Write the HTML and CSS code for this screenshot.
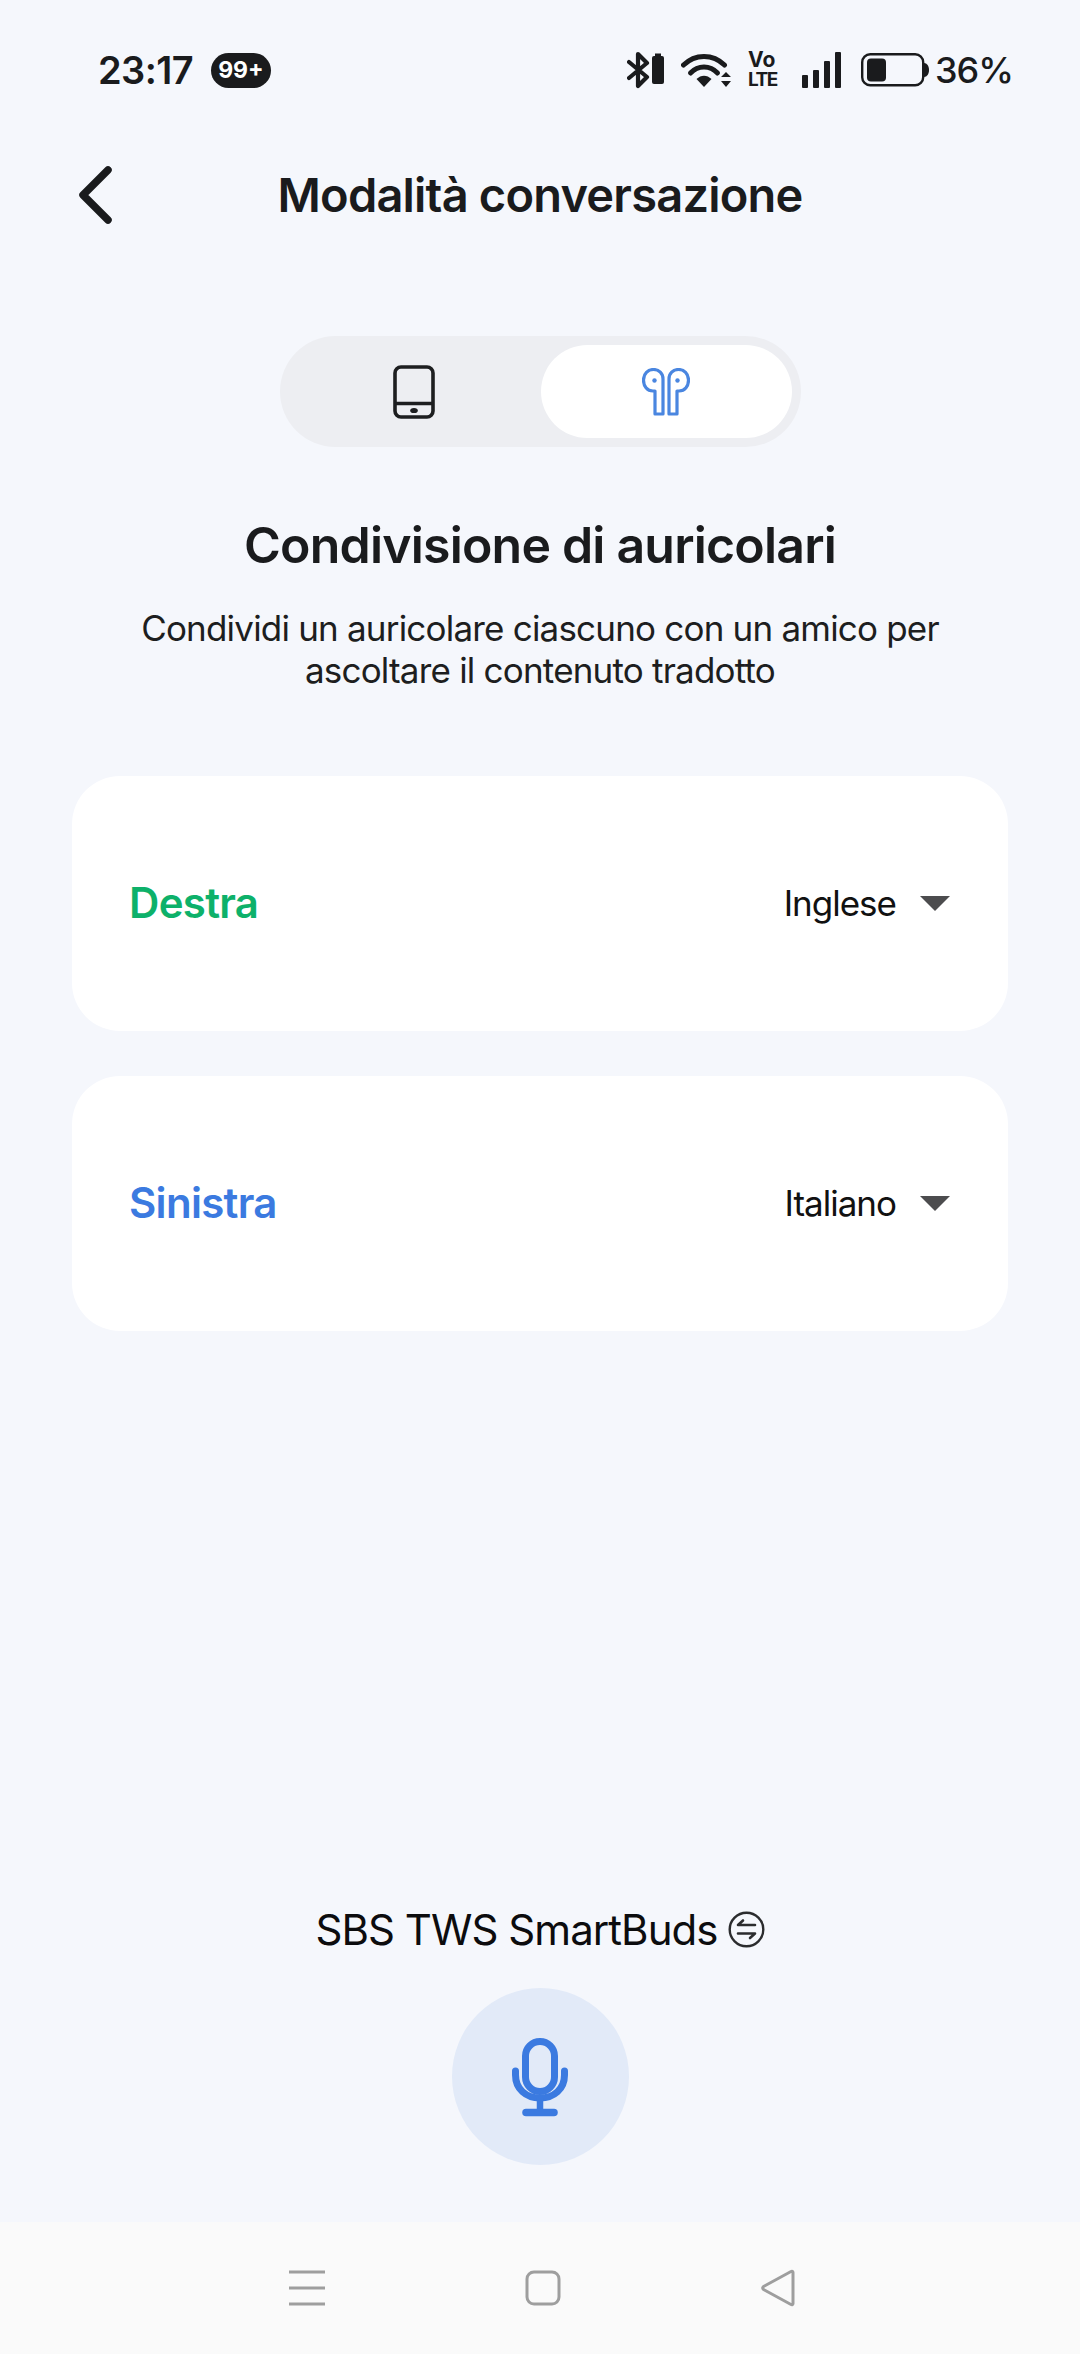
FILE: index.html
```html
<!DOCTYPE html>
<html lang="it">
<head>
  <meta charset="UTF-8" />
  <meta name="viewport" content="width=device-width, initial-scale=1.0" />
  <title>Modalità conversazione</title>
  <link rel="stylesheet" href="styles.css">
</head>
<body>
  <div class="page">
    <!-- Status bar -->
    <div class="status-bar">
      <div class="status-left">
        <span class="time">23:17</span>
        <span class="notif-badge">99+</span>
      </div>
      <div class="status-right">
        <svg class="ic-bt" width="38" height="38" viewBox="0 0 38 38">
          <path d="M2 11 L20 26 L11 35 L11 3 L20 12 L2 27" fill="none" stroke="#1a1b1d" stroke-width="4.200" stroke-linejoin="round" stroke-linecap="round"/>
          <rect x="25" y="5" width="12" height="28" rx="2" fill="#1a1b1d"/>
          <rect x="28" y="2.500" width="6" height="3" fill="#1a1b1d"/>
        </svg>
        <svg class="ic-wifi" width="50" height="36" viewBox="0 0 50 36">
          <path d="M2.500 13 C14 1.500 32 1.500 43.500 13" fill="none" stroke="#1a1b1d" stroke-width="5" stroke-linecap="round"/>
          <path d="M9.500 21 C17 13 29 13 36.500 21" fill="none" stroke="#1a1b1d" stroke-width="5" stroke-linecap="round"/>
          <path d="M15.500 27 C20 22.500 26 22.500 30.500 27 L23 35 Z" fill="#1a1b1d"/>
          <path d="M40 25 L45 20 L50 25 Z M40 29 L50 29 L45 35 Z" fill="#1a1b1d"/>
        </svg>
        <span class="volte"><span>Vo</span><span>LTE</span></span>
        <svg class="ic-signal" width="39" height="36" viewBox="0 0 39 36">
          <rect x="0" y="23" width="6" height="13" rx="1" fill="#1a1b1d"/>
          <rect x="11" y="18" width="6" height="18" rx="1" fill="#1a1b1d"/>
          <rect x="22" y="9" width="6" height="27" rx="1" fill="#1a1b1d"/>
          <rect x="33" y="0" width="6" height="36" rx="1" fill="#1a1b1d"/>
        </svg>
        <svg class="ic-batt" width="68" height="34" viewBox="0 0 68 34">
          <rect x="1.200" y="1.200" width="61" height="31" rx="8" fill="none" stroke="#1a1b1d" stroke-width="2.400"/>
          <rect x="6" y="5.500" width="19" height="23" rx="4" fill="#1a1b1d"/>
          <path d="M63 10 C66 10 68 13 68 17 C68 21 66 24 63 24 Z" fill="#1a1b1d"/>
        </svg>
        <span class="batt-pct">36%</span>
      </div>
    </div>

    <!-- Header -->
    <div class="header">
      <svg class="back-icon" width="34" height="58" viewBox="0 0 34 58">
        <path d="M30 4 L5 29 L30 54" fill="none" stroke="#1a1b1d" stroke-width="7.500" stroke-linecap="round" stroke-linejoin="round"/>
      </svg>
      <h1 class="title">Modalità conversazione</h1>
    </div>

    <!-- Toggle -->
    <div class="mode-toggle">
      <div class="mode-option">
        <svg width="42" height="54" viewBox="0 0 42 54">
          <rect x="2" y="2" width="38" height="50" rx="6" fill="none" stroke="#1d1e20" stroke-width="3.600"/>
          <path d="M2 38.500 L40 38.500" stroke="#1d1e20" stroke-width="3.400"/>
          <ellipse cx="21" cy="45.500" rx="3.800" ry="2.600" fill="#1d1e20"/>
        </svg>
      </div>
      <div class="mode-option active">
        <svg width="48" height="48" viewBox="0 0 48 48">
          <g fill="none" stroke="#4a86e0" stroke-width="3.200" stroke-linejoin="round">
            <path d="M21 46 L13 46 L13 23 L11 23 C5 23 1.500 18 1.500 12 C1.500 5.500 6 1.500 11.500 1.500 C17 1.500 21 5.500 21 11 Z"/>
            <path d="M27 46 L35 46 L35 23 L37 23 C43 23 46.500 18 46.500 12 C46.500 5.500 42 1.500 36.500 1.500 C31 1.500 27 5.500 27 11 Z"/>
          </g>
          <circle cx="12.500" cy="12.500" r="2.200" fill="#4a86e0"/>
          <circle cx="35.500" cy="12.500" r="2.200" fill="#4a86e0"/>
        </svg>
      </div>
    </div>

    <h2 class="heading">Condivisione di auricolari</h2>
    <p class="subtext">Condividi un auricolare ciascuno con un amico per<br>ascoltare il contenuto tradotto</p>

    <!-- Language cards -->
    <div class="lang-card">
      <span class="side side-right">Destra</span>
      <div class="lang-select">
        <span>Inglese</span>
        <span class="caret"></span>
      </div>
    </div>
    <div class="lang-card">
      <span class="side side-left">Sinistra</span>
      <div class="lang-select">
        <span>Italiano</span>
        <span class="caret"></span>
      </div>
    </div>

    <div class="spacer"></div>

    <!-- Device + mic -->
    <div class="device">
      <span>SBS TWS SmartBuds</span>
      <svg width="37" height="37" viewBox="0 0 37 37">
        <circle cx="18.500" cy="18.500" r="16.800" fill="none" stroke="#2b2c2e" stroke-width="2.400"/>
        <path d="M27 14 L10 14 L15 9.500 M10 22.500 L27 22.500 L22 27" fill="none" stroke="#2b2c2e" stroke-width="2.600" stroke-linecap="round" stroke-linejoin="round"/>
      </svg>
    </div>
    <div class="mic-btn">
      <svg width="58" height="80" viewBox="0 0 58 80">
        <rect x="14.500" y="4.500" width="29" height="50" rx="14.500" fill="none" stroke="#3b7ae0" stroke-width="7"/>
        <path d="M4.500 34 L4.500 38 C4.500 52 15 61 29 61 C43 61 53.500 52 53.500 38 L53.500 34" fill="none" stroke="#3b7ae0" stroke-width="7" stroke-linecap="round"/>
        <path d="M29 61 L29 74" stroke="#3b7ae0" stroke-width="6.500"/>
        <path d="M15 75.500 L43 75.500" stroke="#3b7ae0" stroke-width="7.500" stroke-linecap="round"/>
      </svg>
    </div>

    <!-- Nav bar -->
    <div class="nav-bar">
      <svg width="36" height="38" viewBox="0 0 36 38">
        <path d="M0 3 L36 3 M0 19 L36 19 M0 35 L36 35" stroke="#9e9e9e" stroke-width="3.200"/>
      </svg>
      <svg width="36" height="36" viewBox="0 0 36 36">
        <rect x="2" y="2" width="32" height="32" rx="7" fill="none" stroke="#9e9e9e" stroke-width="3"/>
      </svg>
      <svg width="36" height="38" viewBox="0 0 36 38">
        <path d="M33 3.500 C33 2.500 32 2 31 2.500 L3.500 17.500 C2.500 18.500 2.500 19.500 3.500 20.500 L31 35.500 C32 36 33 35.500 33 34.500 Z" fill="none" stroke="#9e9e9e" stroke-width="3" stroke-linejoin="round"/>
      </svg>
    </div>
  </div>
</body>
</html>
```

FILE: styles.css
```css
* {
  box-sizing: border-box;
}
body {
  margin: 0;
  padding: 0;
  background: #f5f7fc;
  font-family: Inter, 'Noto Sans', sans-serif;
  color: #1a1b1d;
}
.page {
  width: 1080px;
  height: 2354px;
  display: flex;
  flex-direction: column;
  align-items: center;
  overflow: hidden;
}

/* status bar */
.status-bar {
  width: 100%;
  height: 140px;
  padding: 0 67px 0 98px;
  display: flex;
  justify-content: space-between;
  align-items: center;
}
.status-left {
  display: flex;
  align-items: center;
  gap: 18px;
}
.time {
  font-size: 38px;
  font-weight: 600;
  letter-spacing: -0.6px;
}
.notif-badge {
  width: 60px;
  height: 35px;
  border-radius: 18px;
  background: #1a1b1d;
  color: #fff;
  font-size: 23px;
  font-weight: 700;
  display: flex;
  align-items: center;
  justify-content: center;
}
.status-right {
  display: flex;
  align-items: center;
}
.ic-bt {
  margin-right: 16px;
}
.ic-wifi {
  margin-right: 17px;
}
.volte {
  width: 34px;
  margin-right: 20px;
  display: flex;
  flex-direction: column;
  align-items: flex-start;
  font-weight: 700;
  line-height: 20px;
}
.volte span:first-child {
  font-size: 21px;
}
.volte span:last-child {
  font-size: 19px;
  letter-spacing: -1.5px;
}
.ic-signal {
  margin-right: 20px;
}
.ic-batt {
  margin-right: 6px;
}
.batt-pct {
  font-size: 36px;
  font-weight: 500;
  letter-spacing: -1px;
}

/* header */
.header {
  position: relative;
  width: 100%;
  height: 110px;
  display: flex;
  align-items: center;
  justify-content: center;
}
.back-icon {
  position: absolute;
  left: 78px;
  top: 26px;
}
.title {
  margin: 0;
  padding-bottom: 2px;
  font-size: 47px;
  font-weight: 600;
  letter-spacing: -0.8px;
}

/* toggle */
.mode-toggle {
  margin-top: 86px;
  width: 521px;
  height: 111px;
  padding: 9px 9px 9px 8px;
  border-radius: 56px;
  background: #edeef2;
  display: flex;
}
.mode-option {
  width: 251px;
  height: 93px;
  border-radius: 47px;
  display: flex;
  align-items: center;
  justify-content: center;
}
.mode-option:first-child {
  width: 253px;
}
.mode-option.active {
  background: #fff;
}

.heading {
  margin: 68px 0 0;
  font-size: 50px;
  font-weight: 600;
  line-height: 60px;
  letter-spacing: -0.8px;
}
.subtext {
  margin: 32px 0 0;
  font-size: 35px;
  line-height: 42px;
  letter-spacing: -0.8px;
  text-align: center;
  color: #1d1e20;
}

/* cards */
.lang-card {
  width: 936px;
  height: 255px;
  margin-top: 45px;
  padding: 0 58px 2px 57px;
  border-radius: 48px;
  background: #fff;
  display: flex;
  align-items: center;
  justify-content: space-between;
}
.subtext + .lang-card {
  margin-top: 85px;
}
.side {
  font-size: 42px;
  font-weight: 600;
  letter-spacing: -0.7px;
}
.side-right {
  color: #0db16a;
}
.side-left {
  color: #3b7ae0;
}
.lang-select {
  display: flex;
  align-items: center;
  gap: 24px;
  font-size: 35px;
  letter-spacing: -1px;
  color: #111;
}
.caret {
  width: 0;
  height: 0;
  margin-top: 2px;
  border-left: 15px solid transparent;
  border-right: 15px solid transparent;
  border-top: 15px solid #4c4c4e;
}

.spacer {
  flex: 1;
}

/* bottom */
.device {
  display: flex;
  align-items: center;
  gap: 10px;
  font-size: 42px;
  letter-spacing: -0.95px;
  color: #0c0c0e;
}
.mic-btn {
  margin-top: 33px;
  width: 177px;
  height: 177px;
  border-radius: 50%;
  background: #e2eaf8;
  display: flex;
  align-items: center;
  justify-content: center;
}
.nav-bar {
  margin-top: 57px;
  width: 100%;
  height: 132px;
  padding: 0 284px 0 289px;
  background: #fafafa;
  display: flex;
  align-items: center;
  justify-content: space-between;
}
```
